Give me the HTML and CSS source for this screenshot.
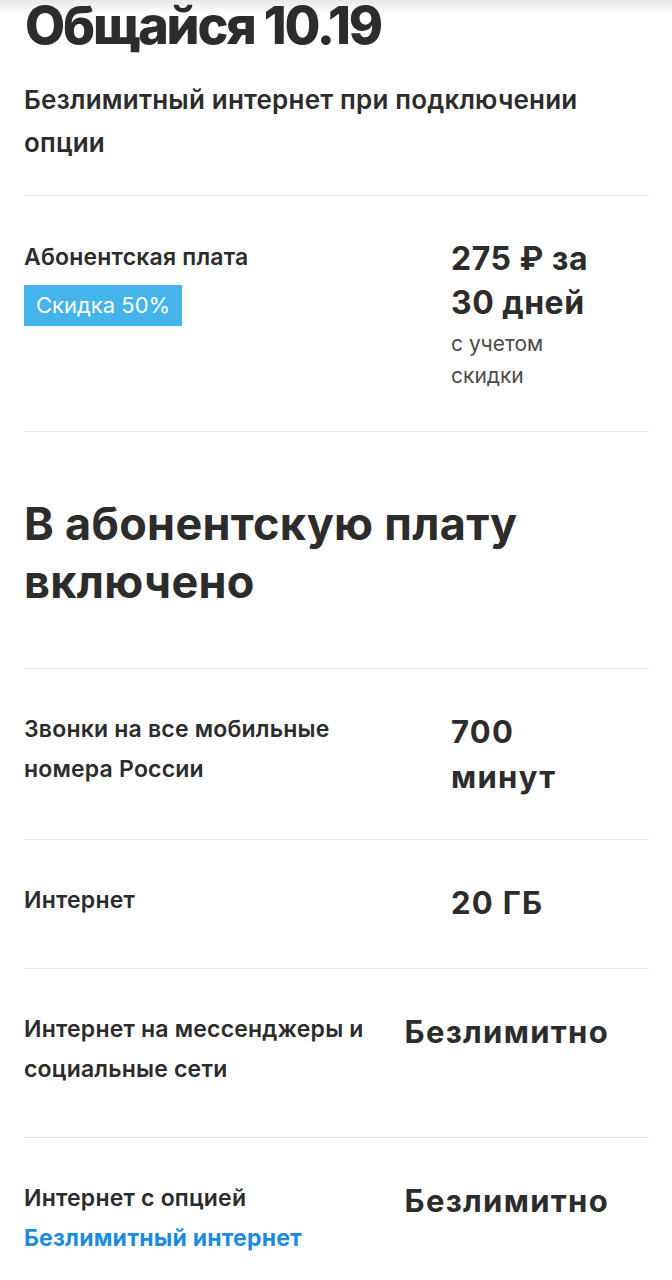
FILE: index.html
```html
<!DOCTYPE html>
<html lang="ru">
<head>
    <meta charset="UTF-8">
    <meta name="viewport" content="width=device-width, initial-scale=1.0">
    <title>Общайся 10.19</title>
    <link rel="stylesheet" href="styles.css">
</head>
<body>

    <div class="tariff">
        <h1 class="tariff-title">Общайся 10.19</h1>
        <p class="tariff-subtitle">Безлимитный интернет при подключении опции</p>

        <div class="row row-price">
            <div class="row-label">
                <p>Абонентская плата</p>
                <span class="badge">Скидка 50%</span>
            </div>
            <div class="row-value">
                <p class="price">275 ₽ за 30 дней</p>
                <p class="price-note">с учетом скидки</p>
            </div>
        </div>

        <h2 class="section-title">В абонентскую плату включено</h2>

        <div class="row">
            <div class="row-label"><p>Звонки на все мобильные номера России</p></div>
            <div class="row-value"><p class="amount">700 минут</p></div>
        </div>
        <div class="row">
            <div class="row-label"><p>Интернет</p></div>
            <div class="row-value"><p class="amount">20 ГБ</p></div>
        </div>
        <div class="row">
            <div class="row-label"><p>Интернет на мессенджеры и социальные сети</p></div>
            <div class="row-value"><p class="amount">Безлимитно</p></div>
        </div>
        <div class="row">
            <div class="row-label">
                <p>Интернет с опцией</p>
                <a class="option-link" href="#">Безлимитный интернет</a>
            </div>
            <div class="row-value"><p class="amount">Безлимитно</p></div>
        </div>
    </div>

</body>
</html>
```

FILE: styles.css
```css
body {
    font-family: Inter, "Noto Sans", sans-serif;
    background-color: #fff;
    color: #2c2c2c;
    margin: 0;
}
p {
    margin: 0;
}
.tariff {
    padding: 0 23px 0 24px;
    background: linear-gradient(#e9e9e9, #fff 14px);
}
.tariff-title {
    font-size: 52px;
    font-weight: 800;
    letter-spacing: -2.2px;
    line-height: 52px;
    margin: 0;
    padding-left: 1px;
}
.tariff-subtitle {
    font-size: 26px;
    font-weight: 600;
    letter-spacing: 0.2px;
    line-height: 43px;
    padding: 26px 0 31px;
    border-bottom: 1px solid #e8e8e8;
}
.row {
    display: flex;
    border-bottom: 1px solid #e8e8e8;
    padding: 40px 0;
}
.row-price {
    padding: 41px 0 39px;
}
.row-label {
    flex: 1;
    font-size: 23px;
    font-weight: 600;
    letter-spacing: 0.2px;
    line-height: 40px;
}
.row-label p {
    max-width: 360px;
    margin-bottom: 8px;
}
.badge {
    display: inline-block;
    background-color: #45b3ec;
    color: #fff;
    font-weight: 400;
    font-size: 22px;
    letter-spacing: 0;
    line-height: 41px;
    padding: 0 12px;
}
.row-value {
    flex: 0 0 158px;
    padding-right: 40px;
}
.price {
    font-size: 32px;
    font-weight: 700;
    line-height: 44px;
    letter-spacing: 0.5px;
}
.price-note {
    font-size: 21px;
    color: #4a4a4a;
    line-height: 32px;
    margin-top: 3px;
}
.amount {
    font-size: 31px;
    font-weight: 700;
    line-height: 45px;
    letter-spacing: 1.3px;
}
.section-title {
    font-size: 45px;
    font-weight: 700;
    line-height: 58px;
    letter-spacing: 0.3px;
    margin: 0;
    padding: 63px 0 57px;
    border-bottom: 1px solid #e8e8e8;
}
.option-link {
    display: block;
    margin-top: -8px;
    color: #1a8be0;
    text-decoration: none;
    font-weight: 700;
}
```
